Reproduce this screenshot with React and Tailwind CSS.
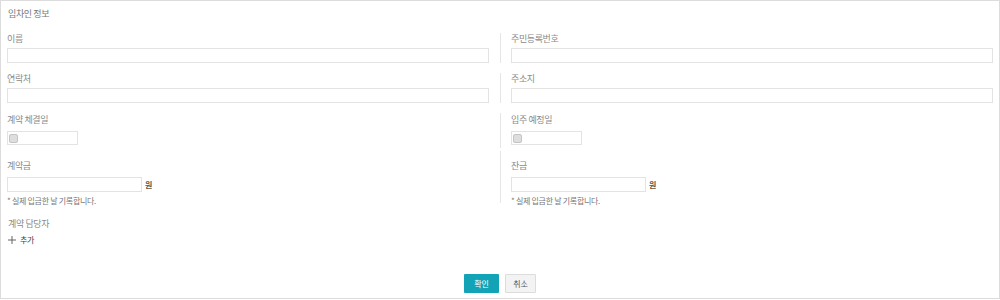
import React from "react";

const font = { fontFamily: '"Noto Sans CJK KR", "Noto Sans", sans-serif' };

const TextInput = ({ className = "" }) => (
  <input
    type="text"
    className={`block h-[15px] border border-[#e3e3e3] bg-white outline-none ${className}`}
  />
);

const DateInput = () => (
  <div className="flex items-center h-[14px] w-[71px] border border-[#e3e3e3] bg-white pl-[1px]">
    <span className="block w-[9px] h-[9px] rounded-[2px] border border-[#c4c4c4] bg-[#dedede]" />
  </div>
);

const Label = ({ children }) => (
  <p className="text-[9px] leading-[12px] text-[#8a8a8a] tracking-[-0.4px]">{children}</p>
);

const Cell = ({ side, className = "", children }) => (
  <div
    className={
      side === "left"
        ? `w-[499px] pl-[6px] pr-[11px] ${className}`
        : `flex-1 border-l border-[#e6e6e6] pl-[10px] pr-[6px] ${className}`
    }
  >
    {children}
  </div>
);

const Row = ({ className = "", children }) => (
  <div className={`flex ${className}`}>{children}</div>
);

const Won = () => (
  <span className="ml-[3px] text-[8px] leading-[12px] text-[#6b5540] font-bold">원</span>
);

const Note = () => (
  <p className="mt-[3px] text-[8px] leading-[11px] text-[#777] tracking-[-0.3px]">
    * 실제 입금한 날 기록합니다.
  </p>
);

const App = () => {
  return (
    <div style={font} className="w-full h-[300px] bg-white">
      <div className="h-[299px] border border-[#dcdcdc] flex flex-col">
        {/* Title */}
        <p className="pl-[7px] pt-[7px] text-[9px] leading-[12px] text-[#777] tracking-[-0.4px]">
          임차인 정보
        </p>

        {/* Row 1 */}
        <Row className="mt-[13px]">
          <Cell side="left" className="h-[30px]">
            <Label>이름</Label>
            <TextInput className="w-[482px] mt-[3px]" />
          </Cell>
          <Cell side="right" className="h-[30px]">
            <Label>주민등록번호</Label>
            <TextInput className="w-[482px] mt-[3px]" />
          </Cell>
        </Row>

        {/* Row 2 */}
        <Row className="mt-[10px]">
          <Cell side="left" className="h-[30px]">
            <Label>연락처</Label>
            <TextInput className="w-[482px] mt-[3px]" />
          </Cell>
          <Cell side="right" className="h-[30px]">
            <Label>주소지</Label>
            <TextInput className="w-[482px] mt-[3px]" />
          </Cell>
        </Row>

        {/* Row 3 */}
        <Row className="mt-[10px]">
          <Cell side="left" className="h-[35px] pt-[1px]">
            <Label>계약 체결일</Label>
            <div className="mt-[5px]">
              <DateInput />
            </div>
          </Cell>
          <Cell side="right" className="h-[35px] pt-[1px]">
            <Label>입주 예정일</Label>
            <div className="mt-[5px]">
              <DateInput />
            </div>
          </Cell>
        </Row>

        {/* Row 4 */}
        <Row className="mt-[3px]">
          <Cell side="left" className="h-[52px] pt-[9px]">
            <Label>계약금</Label>
            <div className="flex items-center mt-[5px]">
              <TextInput className="w-[135px] h-[14px]" />
              <Won />
            </div>
            <Note />
          </Cell>
          <Cell side="right" className="h-[52px] pt-[9px]">
            <Label>잔금</Label>
            <div className="flex items-center mt-[5px]">
              <TextInput className="w-[135px] h-[14px]" />
              <Won />
            </div>
            <Note />
          </Cell>
        </Row>

        {/* Row 5 */}
        <div className="pl-[7px] mt-[15px]">
          <Label>계약 담당자</Label>
          <button className="flex items-center mt-[4px] text-[#444]">
            <svg width="8" height="8" viewBox="0 0 8 8" className="mr-[4px]">
              <path d="M4 0v8M0 4h8" stroke="#555" strokeWidth="0.9" />
            </svg>
            <span className="text-[8px] leading-[12px] tracking-[-0.3px]">추가</span>
          </button>
        </div>

        {/* Buttons */}
        <div className="flex justify-center gap-[6px] mt-auto mb-[5px]">
          <button className="w-[35px] h-[19px] bg-[#12a3b6] text-white text-[8px] rounded-[1px]">
            확인
          </button>
          <button className="w-[31px] h-[19px] bg-[#f3f3f3] border border-[#dcdcdc] text-[#555] text-[8px] rounded-[1px]">
            취소
          </button>
        </div>
      </div>
    </div>
  );
};

export default App;
